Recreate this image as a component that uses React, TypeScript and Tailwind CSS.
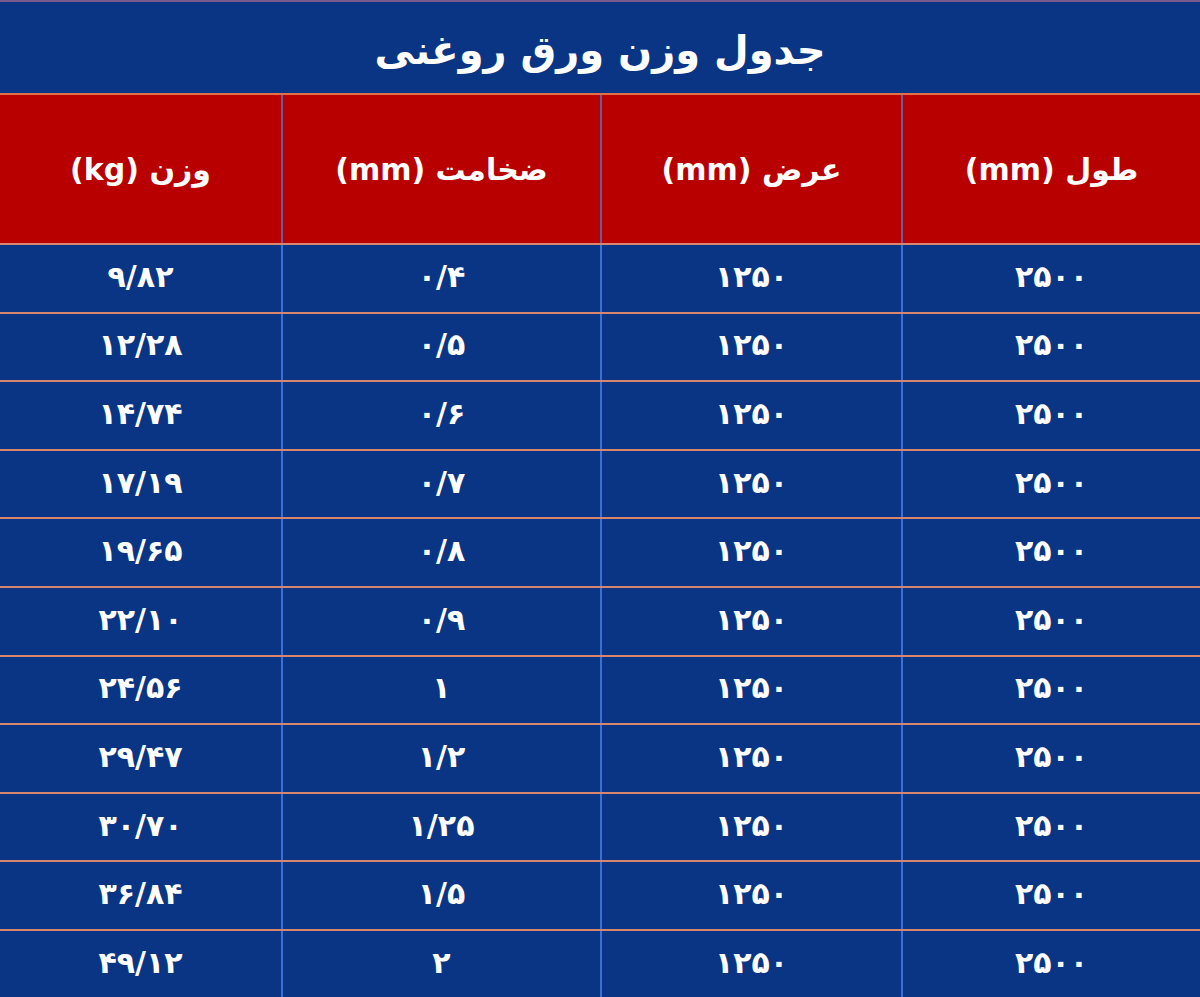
const rows = [
  ["۲۵۰۰", "۱۲۵۰", "۰/۴", "۹/۸۲"],
  ["۲۵۰۰", "۱۲۵۰", "۰/۵", "۱۲/۲۸"],
  ["۲۵۰۰", "۱۲۵۰", "۰/۶", "۱۴/۷۴"],
  ["۲۵۰۰", "۱۲۵۰", "۰/۷", "۱۷/۱۹"],
  ["۲۵۰۰", "۱۲۵۰", "۰/۸", "۱۹/۶۵"],
  ["۲۵۰۰", "۱۲۵۰", "۰/۹", "۲۲/۱۰"],
  ["۲۵۰۰", "۱۲۵۰", "۱", "۲۴/۵۶"],
  ["۲۵۰۰", "۱۲۵۰", "۱/۲", "۲۹/۴۷"],
  ["۲۵۰۰", "۱۲۵۰", "۱/۲۵", "۳۰/۷۰"],
  ["۲۵۰۰", "۱۲۵۰", "۱/۵", "۳۶/۸۴"],
  ["۲۵۰۰", "۱۲۵۰", "۲", "۴۹/۱۲"],
]

const headers = ["طول (mm)", "عرض (mm)", "ضخامت (mm)", "وزن (kg)"]

const font = { fontFamily: '"DejaVu Sans", "Noto Sans", sans-serif' }

export default function App() {
  return (
    <div dir="rtl" className="h-[997px] w-[1200px] overflow-hidden bg-[#0a3585] text-white" style={font}>
      <div className="flex h-[93px] items-center justify-center border-t-2 border-[#7a5a8a] pt-1">
        <h1 className="text-[40px] font-bold leading-none">جدول وزن ورق روغنی</h1>
      </div>

      <div className="grid h-[150px] grid-cols-[299px_301px_319px_281px] border-t-2 border-[#e0704a] bg-[#b80000]">
        {headers.map((h, i) => (
          <div
            key={h}
            className={`flex items-center justify-center text-[30px] font-bold ${
              i < 3 ? "border-l-2 border-[#6b5a9e]" : ""
            }`}
          >
            {h}
          </div>
        ))}
      </div>

      {rows.map((r, ri) => (
        <div
          key={ri}
          className="grid h-[68.6px] grid-cols-[299px_301px_319px_281px] border-t-2 border-[#d9866e]"
        >
          {r.map((c, ci) => (
            <div
              key={ci}
              className={`flex items-center justify-center pb-1 text-[30px] font-bold ${
                ci < 3 ? "border-l-2 border-[#3b6fd6]" : ""
              }`}
            >
              {c}
            </div>
          ))}
        </div>
      ))}
    </div>
  )
}
